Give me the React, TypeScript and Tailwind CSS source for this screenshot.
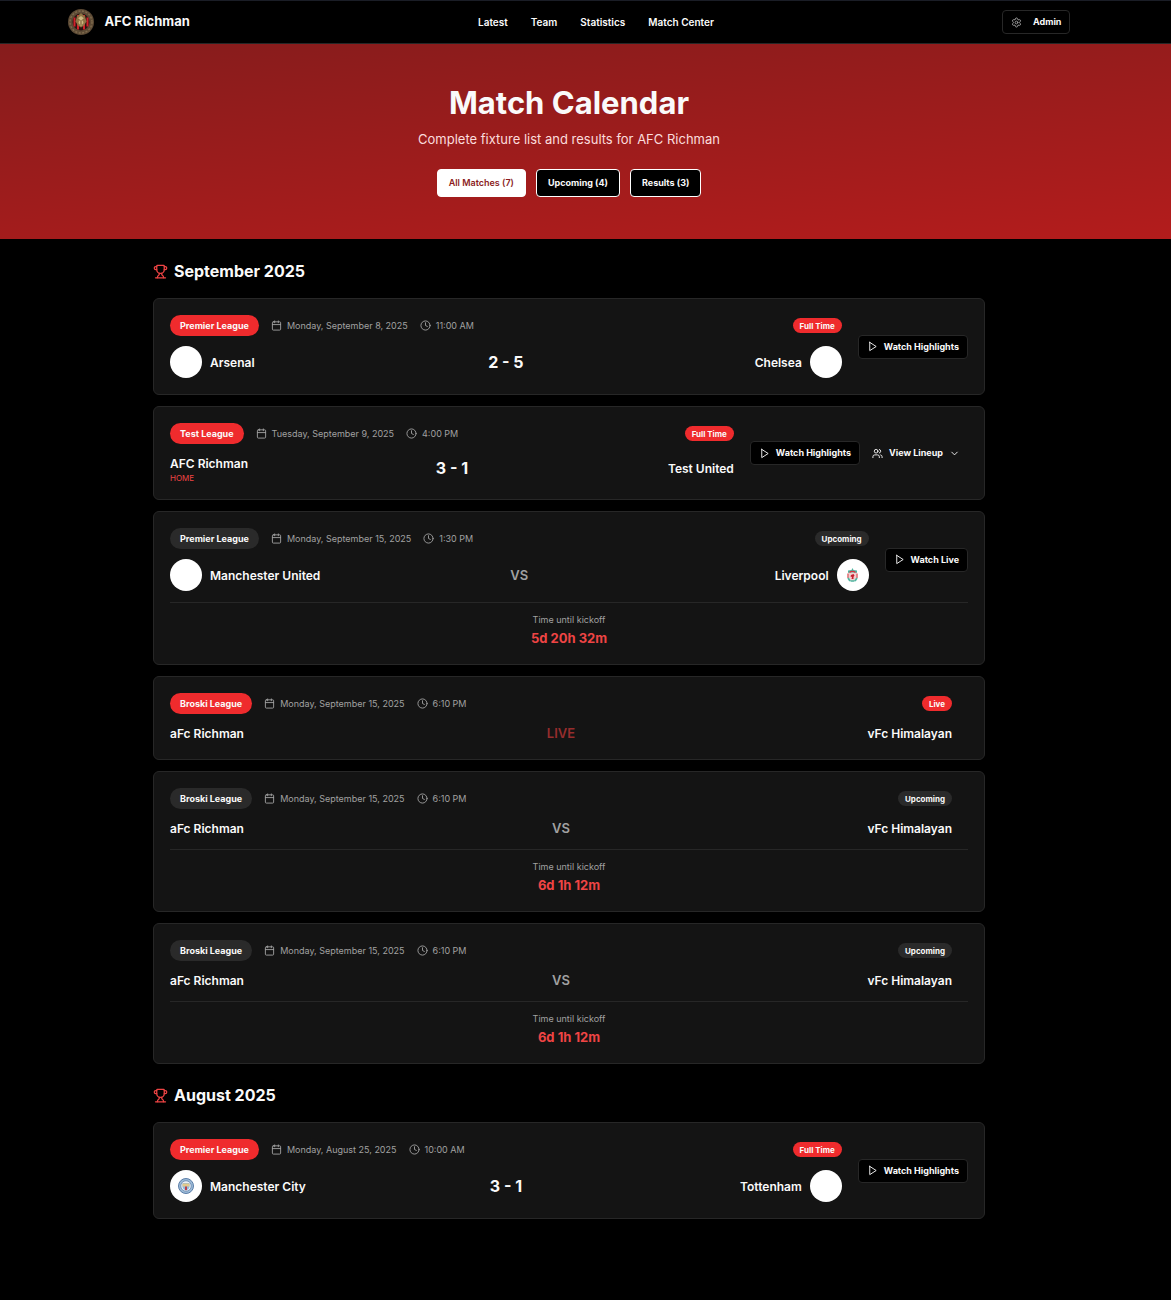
import {
  Calendar,
  ChevronDown,
  Clock,
  Settings,
  Trophy,
  Users,
} from "lucide-react";
import type { ReactNode } from "react";

type Crest = "blank" | "liverpool" | "city";

type Team = { name: string; crest?: Crest; home?: boolean };

type Match = {
  id: number;
  league: string;
  date: string;
  time: string;
  status: "Full Time" | "Upcoming" | "Live";
  home: Team;
  away: Team;
  score?: string;
  action?: string;
  lineup?: boolean;
  countdown?: string;
};

const months: { title: string; matches: Match[] }[] = [
  {
    title: "September 2025",
    matches: [
      {
        id: 1,
        league: "Premier League",
        date: "Monday, September 8, 2025",
        time: "11:00 AM",
        status: "Full Time",
        home: { name: "Arsenal", crest: "blank" },
        away: { name: "Chelsea", crest: "blank" },
        score: "2 - 5",
        action: "Watch Highlights",
      },
      {
        id: 2,
        league: "Test League",
        date: "Tuesday, September 9, 2025",
        time: "4:00 PM",
        status: "Full Time",
        home: { name: "AFC Richman", home: true },
        away: { name: "Test United" },
        score: "3 - 1",
        action: "Watch Highlights",
        lineup: true,
      },
      {
        id: 3,
        league: "Premier League",
        date: "Monday, September 15, 2025",
        time: "1:30 PM",
        status: "Upcoming",
        home: { name: "Manchester United", crest: "blank" },
        away: { name: "Liverpool", crest: "liverpool" },
        action: "Watch Live",
        countdown: "5d 20h 32m",
      },
      {
        id: 4,
        league: "Broski League",
        date: "Monday, September 15, 2025",
        time: "6:10 PM",
        status: "Live",
        home: { name: "aFc Richman" },
        away: { name: "vFc Himalayan" },
      },
      {
        id: 5,
        league: "Broski League",
        date: "Monday, September 15, 2025",
        time: "6:10 PM",
        status: "Upcoming",
        home: { name: "aFc Richman" },
        away: { name: "vFc Himalayan" },
        countdown: "6d 1h 12m",
      },
      {
        id: 6,
        league: "Broski League",
        date: "Monday, September 15, 2025",
        time: "6:10 PM",
        status: "Upcoming",
        home: { name: "aFc Richman" },
        away: { name: "vFc Himalayan" },
        countdown: "6d 1h 12m",
      },
    ],
  },
  {
    title: "August 2025",
    matches: [
      {
        id: 7,
        league: "Premier League",
        date: "Monday, August 25, 2025",
        time: "10:00 AM",
        status: "Full Time",
        home: { name: "Manchester City", crest: "city" },
        away: { name: "Tottenham", crest: "blank" },
        score: "3 - 1",
        action: "Watch Highlights",
      },
    ],
  },
];

function ClubLogo() {
  return (
    <svg viewBox="0 0 52 52" className="size-[26px]" aria-hidden="true">
      <circle cx="26" cy="26" r="26" fill="#5c4a35" />
      <circle cx="26" cy="26" r="22" fill="none" stroke="#7d694c" strokeWidth="3" strokeDasharray="4 3" />
      <circle cx="26" cy="26" r="17" fill="#2a1512" />
      <path d="M13 17v18M20 12v29M32 12v29M39 17v18" stroke="#d3202a" strokeWidth="4" />
      <path d="M26 8l8 7 3 10-5 8-6 4-6-4-5-8 3-10z" fill="#8f7444" />
      <path d="M26 14l5 4-1 6 1 4-5 6-5-6 1-4-1-6z" fill="#cdb680" />
      <path d="M21 21l4 2M31 21l-4 2M26 24v4M24 30h4" stroke="#5a3d1e" strokeWidth="1.6" />
    </svg>
  );
}

function PlayIcon() {
  return (
    <svg
      viewBox="0 0 24 24"
      className="size-[11px]"
      fill="none"
      stroke="currentColor"
      strokeWidth="2"
      strokeLinecap="round"
      strokeLinejoin="round"
      aria-hidden="true"
    >
      <polygon points="6 3 20 12 6 21 6 3" />
    </svg>
  );
}

function LiverpoolCrest() {
  return (
    <svg viewBox="0 0 22 28" className="h-3.5 w-[11px]" aria-hidden="true">
      <path d="M11 0l2 4 7 1v5H2V5l7-1z" fill="#4fb5a0" />
      <path d="M3 9h16v10c0 4-4 6-8 8-4-2-8-4-8-8z" fill="#f0d0d0" />
      <path d="M5 9c3-3 9-3 12 0" fill="none" stroke="#d8323f" strokeWidth="2.4" />
      <path d="M2 11v9M20 11v9" stroke="#e0666c" strokeWidth="3" />
      <path d="M8 14l5-2 2 3-2 3v4H9l1-4-3-1z" fill="#c8202f" />
      <path d="M2 20l4 6M20 20l-4 6M7 26h8" stroke="#4fb5a0" strokeWidth="3.4" />
    </svg>
  );
}

function CityCrest() {
  return (
    <svg viewBox="0 0 32 32" className="size-4" aria-hidden="true">
      <circle cx="16" cy="16" r="15" fill="#9dbcd8" stroke="#5b7da8" strokeWidth="2" />
      <circle cx="16" cy="16" r="10.5" fill="#e9eff5" stroke="#5b7da8" strokeWidth="1.4" />
      <path d="M9 10h14v7c0 4-3 6-7 8-4-2-7-4-7-8z" fill="#8fb9de" />
      <path d="M9 11h14v6H9z" fill="#e2c98a" />
      <path d="M14 17h4v6l-2 2-2-2z" fill="#b8404c" />
    </svg>
  );
}

function TeamCrest({ crest }: { crest: Crest }) {
  return (
    <span className="flex size-8 shrink-0 items-center justify-center rounded-full bg-white">
      {crest === "liverpool" && <LiverpoolCrest />}
      {crest === "city" && <CityCrest />}
    </span>
  );
}

function OutlineButton({ children }: { children: ReactNode }) {
  return (
    <button
      type="button"
      className="flex h-6 items-center gap-1.5 rounded-[4px] border border-[#272727] bg-black px-2 text-[9px] font-bold whitespace-nowrap text-[#fafafa]"
    >
      {children}
    </button>
  );
}

function MatchCard({ match }: { match: Match }) {
  const upcoming = match.status === "Upcoming";
  const tone = upcoming ? "bg-[#2a2a2a]" : "bg-[#ef2b2d]";
  return (
    <article className="rounded-md border border-[#272727] bg-[#141414] p-4">
      <div className="flex items-center gap-4">
        <div className="min-w-0 flex-1">
          <div className="flex items-center justify-between">
            <div className="flex items-center gap-3 text-[9px] text-[#a1a1a1]">
              <span
                className={`flex h-[21px] items-center rounded-full px-2.5 font-bold text-[#fafafa] ${tone}`}
              >
                {match.league}
              </span>
              <span className="flex items-center gap-[5px]">
                <Calendar className="size-[11px]" strokeWidth={2} />
                {match.date}
              </span>
              <span className="flex items-center gap-[5px]">
                <Clock className="size-[11px]" strokeWidth={2} />
                {match.time}
              </span>
            </div>
            <span
              className={`flex h-[15px] items-center rounded-full px-[7px] text-[8px] font-bold text-[#fafafa] ${tone}`}
            >
              {match.status}
            </span>
          </div>
          <div className="mt-2.5 flex items-center text-[12px] leading-[19px] font-semibold text-[#fafafa]">
            <div className="flex flex-1 items-center gap-2">
              {match.home.crest && <TeamCrest crest={match.home.crest} />}
              <div>
                <p>{match.home.name}</p>
                {match.home.home && (
                  <p className="text-[8px] leading-[10px] font-normal text-[#ef4444]">HOME</p>
                )}
              </div>
            </div>
            {match.score ? (
              <p className="text-[16px] font-bold">{match.score}</p>
            ) : match.status === "Live" ? (
              <p className="text-[13px] text-[#962d2d]">LIVE</p>
            ) : (
              <p className="text-[13px] text-[#a1a1a1]">VS</p>
            )}
            <div className="flex flex-1 items-center justify-end gap-2">
              <p>{match.away.name}</p>
              {match.away.crest && <TeamCrest crest={match.away.crest} />}
            </div>
          </div>
        </div>
        <div className="flex items-center gap-1">
          {match.action && (
            <OutlineButton>
              <PlayIcon />
              {match.action}
            </OutlineButton>
          )}
          {match.lineup && (
            <button
              type="button"
              className="flex h-6 items-center gap-1.5 rounded-[4px] px-2 text-[9px] font-bold whitespace-nowrap text-[#fafafa]"
            >
              <Users className="size-[11px]" strokeWidth={2} />
              View Lineup
              <ChevronDown className="size-[11px]" strokeWidth={2} />
            </button>
          )}
        </div>
      </div>
      {match.countdown && (
        <div className="mt-[11px] border-t border-[#272727] pt-2.5 text-center">
          <p className="text-[9px] leading-[14px] text-[#a1a1a1]">Time until kickoff</p>
          <p className="mt-0.5 text-[13px] leading-[19px] font-bold text-[#ef4444]">
            {match.countdown}
          </p>
        </div>
      )}
    </article>
  );
}

export default function App() {
  return (
    <div className="min-h-screen bg-black font-[Inter,sans-serif] text-[#fafafa]">
      <header className="border-t border-b border-t-[#1a1d26] border-b-[#272727] bg-black pr-[33px]">
        <div className="mx-auto flex h-[42px] max-w-[1003px] items-center justify-between">
          <a href="#home" className="flex items-center gap-[11px] text-[13px] font-bold">
            <ClubLogo />
            AFC Richman
          </a>
          <nav className="flex gap-[23px] text-[10px] font-semibold">
            <a href="#latest">Latest</a>
            <a href="#team">Team</a>
            <a href="#statistics">Statistics</a>
            <a href="#match-center">Match Center</a>
          </nav>
          <button
            type="button"
            className="flex h-6 items-center gap-[11px] rounded-[4px] border border-[#272727] bg-black px-2 text-[9px] font-bold"
          >
            <Settings className="size-[11px] text-[#a1a1a1]" strokeWidth={2} />
            Admin
          </button>
        </div>
      </header>

      <section className="bg-[linear-gradient(175deg,#861c1c,#b31c1c)] pt-10 pr-[33px] pb-[42px] text-center">
        <h1 className="text-[31px] leading-[38px] font-bold">Match Calendar</h1>
        <p className="mt-[7px] text-[13px] leading-5 text-[#fbdcdc]">
          Complete fixture list and results for AFC Richman
        </p>
        <div className="mt-5 flex justify-center gap-2.5 text-[9px] font-bold">
          <button type="button" className="h-7 rounded-[4px] border border-white bg-white px-[11px] font-semibold text-[#8b1c1c]">
            All Matches (7)
          </button>
          <button type="button" className="h-7 rounded-[4px] border border-white bg-black px-[11px]">
            Upcoming (4)
          </button>
          <button type="button" className="h-7 rounded-[4px] border border-white bg-black px-[11px]">
            Results (3)
          </button>
        </div>
      </section>

      <main className="pt-[21px] pr-[33px] pb-20">
        <div className="mx-auto flex max-w-[832px] flex-col gap-5">
          {months.map((month) => (
            <section key={month.title}>
              <h2 className="flex items-center gap-1.5 text-[16px] leading-[22px] font-bold">
                <Trophy className="size-[15px] text-[#ef4444]" strokeWidth={2} />
                {month.title}
              </h2>
              <div className="mt-4 flex flex-col gap-[11px]">
                {month.matches.map((match) => (
                  <MatchCard key={match.id} match={match} />
                ))}
              </div>
            </section>
          ))}
        </div>
      </main>
    </div>
  );
}
